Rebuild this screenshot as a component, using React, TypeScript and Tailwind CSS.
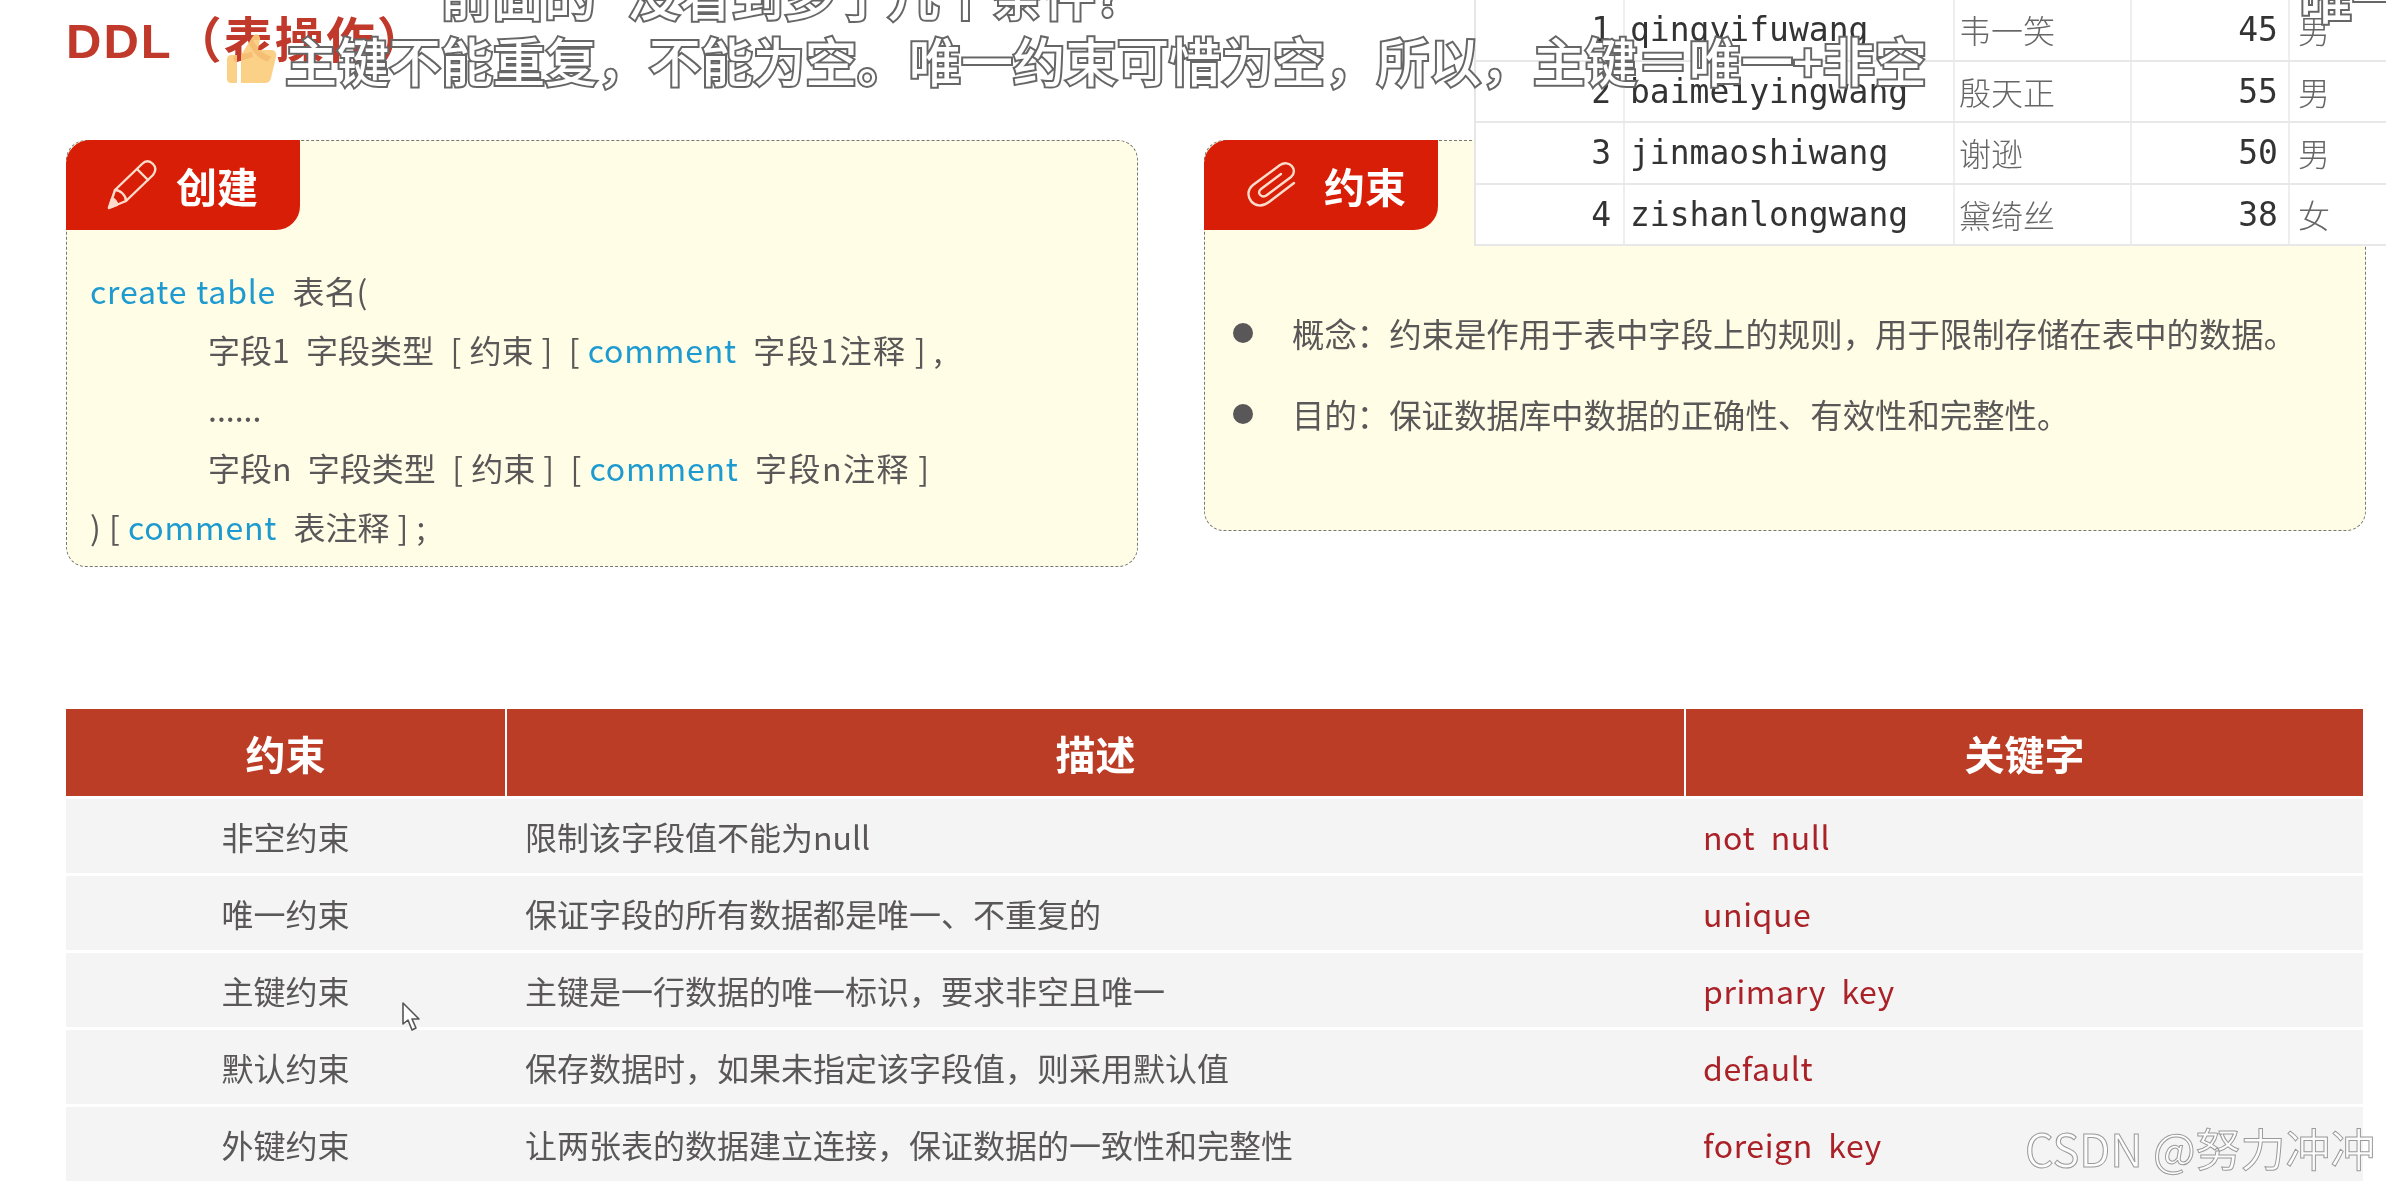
import React from "react";

const cjk = "font-['Noto_Sans_CJK_SC','Noto_Sans',sans-serif]";

const students = [
  { id: 1, user: "qingyifuwang", name: "韦一笑", age: 45, sex: "男" },
  { id: 2, user: "baimeiyingwang", name: "殷天正", age: 55, sex: "男" },
  { id: 3, user: "jinmaoshiwang", name: "谢逊", age: 50, sex: "男" },
  { id: 4, user: "zishanlongwang", name: "黛绮丝", age: 38, sex: "女" },
];

const rules = [
  { name: "非空约束", desc: "限制该字段值不能为null", key: "not  null" },
  { name: "唯一约束", desc: "保证字段的所有数据都是唯一、不重复的", key: "unique" },
  { name: "主键约束", desc: "主键是一行数据的唯一标识，要求非空且唯一", key: "primary  key" },
  { name: "默认约束", desc: "保存数据时，如果未指定该字段值，则采用默认值", key: "default" },
  { name: "外键约束", desc: "让两张表的数据建立连接，保证数据的一致性和完整性", key: "foreign  key" },
];

const PencilIcon = () => (
  <svg width="52" height="52" viewBox="0 0 52 52" fill="none" stroke="#fcdccb" strokeWidth="2.4" strokeLinejoin="round" strokeLinecap="round">
    <path d="M3 49 L9 31 L36 5 C40 1 44 2 47 5 C50 8 50 12 47 16 L20 42 Z" />
    <path d="M31 10 L42 21" />
    <path d="M9 31 C14 31 20 36 20 42" />
    <path d="M3 49 L6 40 C9 40 11 43 11 46 Z" fill="#fcdccb" />
  </svg>
);

const ClipIcon = () => (
  <svg width="56" height="50" viewBox="0 0 56 50" fill="none" stroke="#fcdccb" strokeWidth="2.4" strokeLinecap="round">
    <path d="M37 14 L17 29 C12 33 18 39 23 35 L47 17 C55 10 45 -1 36 5 L9 25 C-3 35 11 53 25 42 L50 23" />
  </svg>
);

const ThumbIcon = () => (
  <svg width="50" height="52" viewBox="0 0 50 52" className="opacity-90">
    <path d="M0 26 C0 23 2 22 4 22 L10 22 L10 50 L4 50 C2 50 0 49 0 46 Z" fill="#fbcd7c" />
    <path d="M14 22 L26 3 C29 -1 34 2 33 7 L31 17 L44 17 C48 17 50 20 49 24 L44 45 C43 49 41 50 37 50 L14 50 Z" fill="#fbcd7c" />
  </svg>
);

const CursorIcon = () => (
  <svg width="21" height="30" viewBox="0 0 21 30" fill="#fff" stroke="#555" strokeWidth="1.6" strokeLinejoin="round">
    <path d="M2 1 L2 22 L7 18 L11 28 L15 26 L11 17 L18 17 Z" />
  </svg>
);

const Tab = ({ icon, label, gap }: { icon: React.ReactNode; label: string; gap: string }) => (
  <div className={`flex h-[90px] w-[234px] items-center rounded-tl-[24px] rounded-br-[24px] bg-[#d81e06] pl-10 ${gap}`}>
    {icon}
    <span className="text-[41px] leading-none font-bold text-white">{label}</span>
  </div>
);

const Key = ({ children }: { children: React.ReactNode }) => (
  <span className="tracking-[0.8px] text-[#1d9ad0]">{children}</span>
);

const Note = ({ children }: { children: React.ReactNode }) => (
  <span className="tracking-[1.5px]">{children}</span>
);

const CodeLine = ({ indent, children }: { indent?: boolean; children: React.ReactNode }) => (
  <div className={`flex h-[59px] items-center whitespace-pre [word-spacing:1px] ${indent ? "pl-[118px]" : ""}`}>
    <span>{children}</span>
  </div>
);

const Outlined = ({ className, children }: { className: string; children: React.ReactNode }) => (
  <div className={`absolute font-medium whitespace-pre text-white [paint-order:stroke_fill] [-webkit-text-stroke:4px_#666] ${className}`}>
    {children}
  </div>
);

export default function App() {
  return (
    <div className={`relative h-[1190px] w-[2386px] overflow-hidden bg-white text-[#595757] blur-[0.6px] ${cjk}`}>
      <h1 className="h-[140px] pt-[9px] pl-[66px] font-['Liberation_Sans','Noto_Sans_CJK_SC',sans-serif] text-[49px] leading-[64px] font-bold tracking-[2px] text-[#c0392b]">DDL（表操作）</h1>

      <div className="flex items-start pl-[66px]">
        <div className="h-[427px] w-[1072px] rounded-[20px] border border-dashed border-[#777] bg-[#fffde6]">
          <div className="-mt-px -ml-px">
            <Tab icon={<PencilIcon />} label="创建" gap="gap-[18px]" />
          </div>
          <div className="pt-[30px] pl-[23px] text-[32px]">
            <CodeLine><Key>create table</Key>  表名(</CodeLine>
            <CodeLine indent>字段1  字段类型  [ 约束 ]  [ <Key>comment</Key>  <Note>字段1注释</Note> ] ,</CodeLine>
            <CodeLine indent>......</CodeLine>
            <CodeLine indent>字段n  字段类型  [ 约束 ]  [ <Key>comment</Key>  <Note>字段n注释</Note> ]</CodeLine>
            <CodeLine>) [ <Key>comment</Key>  表注释 ] ;</CodeLine>
          </div>
        </div>

        <div className="ml-[66px] h-[391px] w-[1162px] rounded-[20px] border border-dashed border-[#777] bg-[#fffde6]">
          <div className="-mt-px -ml-px">
            <Tab icon={<ClipIcon />} label="约束" gap="gap-[24px]" />
          </div>
          <div className="flex flex-col gap-[33px] pt-[79px] pl-[28px] text-[32.4px]">
            <div className="flex h-[48px] items-center gap-[39px]">
              <span className="h-[20px] w-[20px] rounded-full bg-[#595757]" />
              <span>概念：约束是作用于表中字段上的规则，用于限制存储在表中的数据。</span>
            </div>
            <div className="flex h-[48px] items-center gap-[39px]">
              <span className="h-[20px] w-[20px] rounded-full bg-[#595757]" />
              <span>目的：保证数据库中数据的正确性、有效性和完整性。</span>
            </div>
          </div>
        </div>
      </div>

      <div className="mt-[142px] ml-[66px] w-[2297px]">
        <div className="grid h-[87px] grid-cols-[439px_1177px_1fr] gap-x-[2px] bg-white text-[40px] font-bold text-white">
          <div className="flex items-center justify-center bg-[#bc3d25]">约束</div>
          <div className="flex items-center justify-center bg-[#bc3d25]">描述</div>
          <div className="flex items-center justify-center bg-[#bc3d25]">关键字</div>
        </div>
        <div className="flex flex-col gap-[3px] pt-[3px]">
          {rules.map((r) => (
            <div key={r.name} className="grid h-[74px] grid-cols-[439px_1181px_1fr] items-center bg-[#f4f4f4] text-[32px]">
              <div className="text-center">{r.name}</div>
              <div className="pl-[20px]">{r.desc}</div>
              <div className="whitespace-pre pl-[17px] tracking-[0.6px] text-[#aa2127]">{r.key}</div>
            </div>
          ))}
        </div>
      </div>

      {/* video overlays */}
      <div className="absolute top-0 right-0 w-[912px] border-l-2 border-[#e6e6e6] bg-white">
        {students.map((s) => (
          <div key={s.id} className="grid h-[61.5px] grid-cols-[147px_330px_177px_158px_1fr] items-center border-b-2 border-[#e8e8e8] text-[33px]">
            <div className="pr-[12px] text-right font-['DejaVu_Sans_Mono',monospace] text-[#333]">{s.id}</div>
            <div className="h-full border-l-2 border-[#eee] pl-[5px] leading-[59px] font-['DejaVu_Sans_Mono',monospace] text-[#333]">{s.user}</div>
            <div className="h-full border-l-2 border-[#eee] pl-[4px] text-[32px] leading-[59px] font-light text-[#666]">{s.name}</div>
            <div className="h-full border-l-2 border-[#eee] pr-[10px] text-right leading-[59px] font-['DejaVu_Sans_Mono',monospace] text-[#333]">{s.age}</div>
            <div className="h-full border-l-2 border-[#eee] pl-[8px] text-[32px] leading-[59px] font-light text-[#666]">{s.sex}</div>
          </div>
        ))}
      </div>

      <div className="absolute top-[33px] left-[227px]"><ThumbIcon /></div>
      <Outlined className="top-[-38px] left-[440px] text-[52px] leading-[64px] [word-spacing:4px]">前面的  没看到多了几个条件?</Outlined>
      <Outlined className="top-[28px] left-[285px] text-[52px] leading-[64px]">主键不能重复，不能为空。唯一约束可惜为空，所以，主键＝唯一+非空</Outlined>
      <Outlined className="top-[-35px] left-[2300px] text-[52px] leading-[64px]">唯一</Outlined>

      <div className="absolute top-[1002px] left-[401px]"><CursorIcon /></div>
      <div className="absolute top-[1118px] left-[2025px] text-[45px] leading-[60px] whitespace-pre text-white/70 [-webkit-text-stroke:1px_#9a9a9a]">CSDN @努力冲冲</div>
    </div>
  );
}
